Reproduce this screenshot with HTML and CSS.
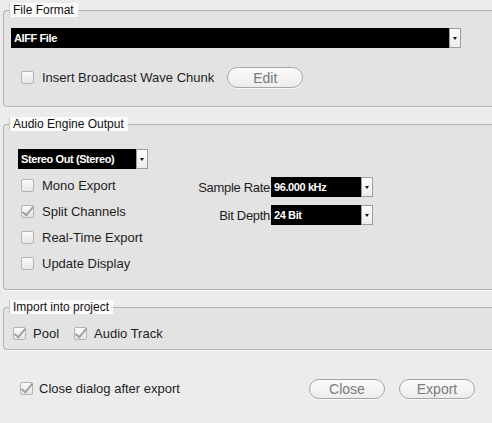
FILE: index.html
```html
<!DOCTYPE html>
<html lang="en">
<head>
  <meta charset="UTF-8" />
  <title>Export Audio Mixdown</title>
  <link rel="stylesheet" href="styles.css">
</head>
<body>
  <div class="dialog">
    <fieldset class="group group-format">
      <legend>File Format</legend>
      <div class="select select-wide"><span>AIFF File</span><i class="arrow"></i></div>
      <div class="format-row">
        <label class="check"><span class="box"></span>Insert Broadcast Wave Chunk</label>
        <button class="pill pill-edit">Edit</button>
      </div>
    </fieldset>

    <fieldset class="group group-engine">
      <legend>Audio Engine Output</legend>
      <div class="select select-output"><span>Stereo Out (Stereo)</span><i class="arrow"></i></div>
      <div class="engine-body">
        <div class="engine-checks">
          <label class="check"><span class="box"></span>Mono Export</label>
          <label class="check"><span class="box checked"></span>Split Channels</label>
          <label class="check"><span class="box"></span>Real-Time Export</label>
          <label class="check"><span class="box"></span>Update Display</label>
        </div>
        <div class="engine-fields">
          <span class="field-label">Sample Rate</span>
          <div class="select select-small"><span>96.000 kHz</span><i class="arrow"></i></div>
          <span class="field-label">Bit Depth</span>
          <div class="select select-small"><span>24 Bit</span><i class="arrow"></i></div>
        </div>
      </div>
    </fieldset>

    <fieldset class="group group-import">
      <legend>Import into project</legend>
      <div class="import-row">
        <label class="check"><span class="box checked"></span>Pool</label>
        <label class="check"><span class="box checked"></span>Audio Track</label>
      </div>
    </fieldset>

    <div class="footer">
      <label class="check check-footer"><span class="box checked"></span>Close dialog after export</label>
      <div class="footer-buttons">
        <button class="pill">Close</button>
        <button class="pill">Export</button>
      </div>
    </div>
  </div>
</body>
</html>
```

FILE: styles.css
```css
html, body {
  margin: 0;
  padding: 0;
  height: 100%;
  overflow: hidden;
}
body {
  background: #ececec;
  color: #1e1e1e;
  font-family: 'Liberation Sans', Arial, sans-serif;
  font-size: 13px;
}
.dialog {
  width: 492px;
  padding-top: 3px;
}

/* group boxes (they run on past the right edge of the window) */
.group {
  margin: 0 0 0 3px;
  width: 489px;
  box-sizing: border-box;
  padding: 0 0 0 7px;
  border: 1px solid #b3b3b3;
  border-right: none;
  border-radius: 4px 0 0 4px;
  background: #e3e3e3;
  box-shadow: 0 1px 0 #f6f6f6;
  min-inline-size: 0;
}
.group + .group {
  margin-top: 10px;
}
.group legend {
  margin-left: -1px;
  padding: 0 4px 0 3px;
  height: 14px;
  line-height: 14px;
  font-size: 12px;
  background: #fbfbfb;
  box-shadow: -1px 0 0 #c9c9c9;
  color: #111;
}

/* black popup menus */
.select {
  display: flex;
  height: 20px;
  box-sizing: border-box;
}
.select span {
  flex: 1;
  background: #000;
  color: #fff;
  font-weight: bold;
  font-size: 11px;
  letter-spacing: -0.4px;
  line-height: 20px;
  padding-left: 3px;
  white-space: nowrap;
}
.select .arrow {
  width: 12px;
  box-sizing: border-box;
  background: linear-gradient(#fdfdfd, #ededed);
  border: 1px solid #9d9d9d;
  position: relative;
}
.select .arrow::after {
  content: "";
  position: absolute;
  left: 3px;
  top: 8px;
  border-top: 3px solid #111;
  border-left: 2.5px solid transparent;
  border-right: 2.5px solid transparent;
}
.select-wide {
  width: 450px;
  margin-top: 11px;
}
.select-output {
  width: 130px;
  margin: 18px 0 0 7px;
}
.select-small {
  width: 102px;
}

/* checkboxes */
.check {
  display: flex;
  align-items: center;
  gap: 8px;
  height: 26px;
  white-space: nowrap;
}
.box {
  width: 13px;
  height: 13px;
  box-sizing: border-box;
  border: 1px solid #b4b4b4;
  border-radius: 2px;
  background: linear-gradient(#fafafa, #e6e6e6);
  position: relative;
}
.box.checked::after {
  content: "";
  position: absolute;
  left: 3px;
  top: -2px;
  width: 4px;
  height: 10px;
  border-right: 2px solid #a2a2a2;
  border-bottom: 2px solid #a2a2a2;
  transform: rotate(40deg);
}

/* pill buttons */
.pill {
  width: 76px;
  height: 21px;
  border: 1px solid #a4a4a4;
  border-radius: 11px;
  background: linear-gradient(#fbfbfb, #ececec);
  color: #7a7a7a;
  font-family: 'Liberation Sans', Arial, sans-serif;
  font-size: 14px;
  padding: 0;
  box-shadow: 0 1px 0 #f8f8f8;
}

/* file format */
.format-row {
  display: flex;
  align-items: center;
  gap: 13px;
  padding: 19px 0 18px 10px;
}
.format-row .check {
  height: 21px;
}

/* audio engine output */
.engine-body {
  display: flex;
  padding: 3px 0 13px 10px;
}
.engine-checks {
  width: 170px;
}
.engine-fields {
  display: grid;
  grid-template-columns: 80px 102px;
  row-gap: 8px;
  margin-top: 5px;
  align-items: center;
  align-self: flex-start;
}
.field-label {
  text-align: right;
  padding-right: 1px;
  letter-spacing: -0.3px;
}

/* import */
.import-row {
  display: flex;
  gap: 15px;
  padding: 9px 0 6px 2px;
}
.import-row .check {
  height: 20px;
  gap: 7px;
}

/* footer */
.footer {
  display: flex;
  align-items: center;
  justify-content: space-between;
  margin-top: 28px;
  padding: 0 17px 0 20px;
  height: 21px;
}
.check-footer {
  gap: 6px;
}
.footer-buttons {
  display: flex;
  gap: 14px;
}
.footer-buttons .pill {
  height: 20px;
}
```
